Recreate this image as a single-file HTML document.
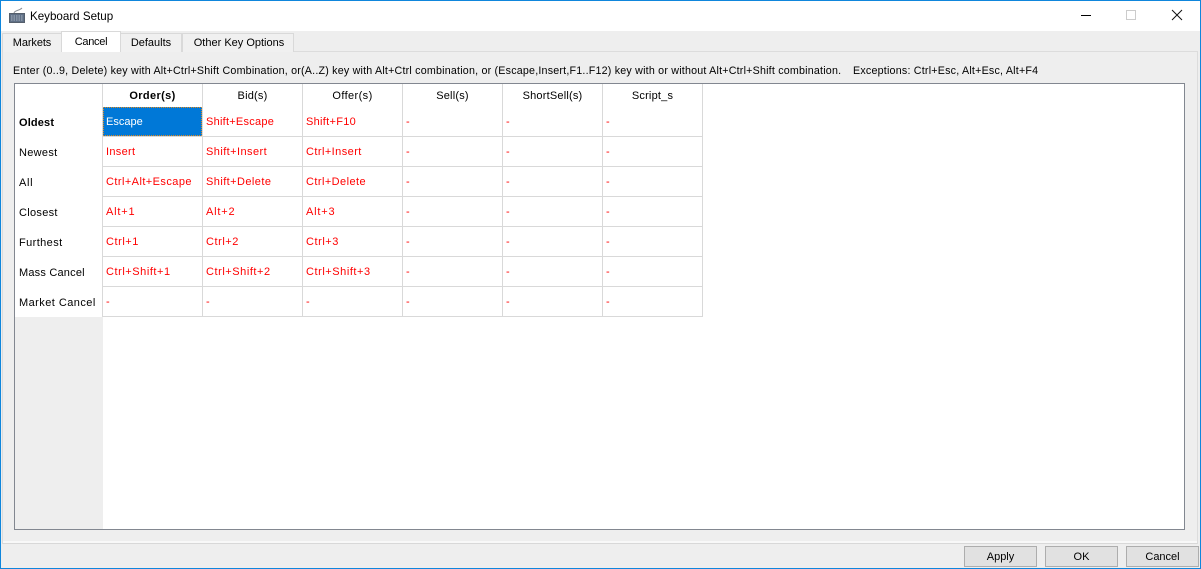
<!DOCTYPE html>
<html><head><meta charset="utf-8"><style>
html,body{margin:0;padding:0;width:1201px;height:569px;overflow:hidden;background:#eee;font-family:"Liberation Sans",sans-serif;font-size:11px;color:#000}
div{position:absolute;box-sizing:border-box}
.t{white-space:nowrap;line-height:14px;height:14px}
.r{color:#f00;letter-spacing:.43px}
.l{letter-spacing:.3px}
.n{letter-spacing:.8px}
.m{letter-spacing:.55px}
.c{text-align:center;letter-spacing:.2px}
.v{width:1px;top:84px;height:233px;background:#d9d9d9}
.h{left:103px;width:600px;height:1px;background:#d9d9d9}
.btn{top:546px;height:21px;width:73px;background:#e1e1e1;border:1px solid #adadad;text-align:center;line-height:20px}
.tab{top:33px;height:19px;background:#f0f0f0;border:1px solid #d9d9d9;border-bottom:0;text-align:center;line-height:18px}
</style></head><body>
<div style="left:0;top:0;width:1201px;height:31px;background:#fff"></div>
<svg style="position:absolute;left:9px;top:7px" width="17" height="16" viewBox="0 0 17 16">
<path d="M5 6 C6 3 10 4 13 1" fill="none" stroke="#8a8f96" stroke-width="1"/>
<rect x="0.5" y="6.5" width="15" height="9" fill="#5f6f85" stroke="#555f6c"/>
<path d="M2 9h12M2 11h12M2 13h12" stroke="#aab4c2" stroke-width="1" stroke-dasharray="1.5 1"/>
</svg>
<div class="t" style="left:30px;top:10px;font-size:11.6px">Keyboard Setup</div>
<div style="left:1081px;top:15px;width:10px;height:1px;background:#000"></div>
<div style="left:1126px;top:10px;width:10px;height:10px;border:1px solid #ccc"></div>
<svg style="position:absolute;left:1171px;top:9px" width="12" height="12"><path d="M1 1L11 11M11 1L1 11" stroke="#111" stroke-width="1"/></svg>

<div style="left:2px;top:51px;width:1196px;height:493px;background:#eee;border:1px solid #dcdcdc;border-bottom:2px solid #d8d8d8"></div>
<div style="left:3px;top:541px;width:1194px;height:2px;background:#f8f8f8"></div>
<div class="tab" style="left:2px;width:60px;letter-spacing:-.1px">Markets</div>
<div class="tab" style="left:120px;width:62px">Defaults</div>
<div class="tab" style="left:182px;width:112px;padding-left:2px">Other Key Options</div>
<div class="tab" style="left:61px;top:31px;width:60px;height:21px;background:#fff;line-height:20px;letter-spacing:-.3px">Cancel</div>

<div class="t" style="left:13px;top:64px;font-size:10.7px;letter-spacing:.207px">Enter (0..9, Delete) key with Alt+Ctrl+Shift Combination, or(A..Z) key with Alt+Ctrl combination, or (Escape,Insert,F1..F12) key with or without Alt+Ctrl+Shift combination.</div>
<div class="t" style="left:853px;top:64px;font-size:10.7px;letter-spacing:.216px">Exceptions: Ctrl+Esc, Alt+Esc, Alt+F4</div>

<div style="left:14px;top:83px;width:1171px;height:447px;background:#fff;border:1px solid #828790"></div>
<div style="left:15px;top:317px;width:88px;height:212px;background:#eee"></div>
<div class="v" style="left:102px"></div><div class="v" style="left:202px"></div><div class="v" style="left:302px"></div><div class="v" style="left:402px"></div><div class="v" style="left:502px"></div><div class="v" style="left:602px"></div><div class="v" style="left:702px"></div>
<div class="h" style="top:136px"></div><div class="h" style="top:166px"></div><div class="h" style="top:196px"></div><div class="h" style="top:226px"></div><div class="h" style="top:256px"></div><div class="h" style="top:286px"></div><div class="h" style="top:316px"></div>

<div class="t c" style="left:103px;width:99px;top:89px;font-weight:bold;letter-spacing:.35px">Order(s)</div>
<div class="t c" style="left:203px;width:99px;top:89px">Bid(s)</div>
<div class="t c" style="left:303px;width:99px;top:89px;letter-spacing:.4px">Offer(s)</div>
<div class="t c" style="left:403px;width:99px;top:89px">Sell(s)</div>
<div class="t c" style="left:503px;width:99px;top:89px">ShortSell(s)</div>
<div class="t c" style="left:603px;width:99px;top:89px">Script_s</div>

<div class="t l" style="left:19px;top:116px;font-weight:bold;letter-spacing:.15px">Oldest</div>
<div class="t l" style="left:19px;top:146px">Newest</div>
<div class="t l" style="left:19px;top:176px;letter-spacing:.7px">All</div>
<div class="t l" style="left:19px;top:206px">Closest</div>
<div class="t l" style="left:19px;top:236px;letter-spacing:.4px">Furthest</div>
<div class="t l" style="left:19px;top:266px;letter-spacing:.2px">Mass Cancel</div>
<div class="t l" style="left:19px;top:296px;letter-spacing:.45px">Market Cancel</div>

<div style="left:103px;top:107px;width:99px;height:29px;background:#0078d7;border:1px dotted #e08a1e"></div>
<div class="t" style="left:106px;top:115px;color:#fff">Escape</div>
<div class="t r" style="left:206px;top:115px;letter-spacing:.25px">Shift+Escape</div>
<div class="t r" style="left:306px;top:115px;letter-spacing:.3px">Shift+F10</div>
<div class="t r" style="left:406px;top:115px">-</div><div class="t r" style="left:506px;top:115px">-</div><div class="t r" style="left:606px;top:115px">-</div>

<div class="t r" style="left:106px;top:145px;letter-spacing:.3px">Insert</div>
<div class="t r" style="left:206px;top:145px">Shift+Insert</div>
<div class="t r" style="left:306px;top:145px">Ctrl+Insert</div>
<div class="t r" style="left:406px;top:145px">-</div><div class="t r" style="left:506px;top:145px">-</div><div class="t r" style="left:606px;top:145px">-</div>

<div class="t r" style="left:106px;top:175px">Ctrl+Alt+Escape</div>
<div class="t r" style="left:206px;top:175px">Shift+Delete</div>
<div class="t r" style="left:306px;top:175px">Ctrl+Delete</div>
<div class="t r" style="left:406px;top:175px">-</div><div class="t r" style="left:506px;top:175px">-</div><div class="t r" style="left:606px;top:175px">-</div>

<div class="t r n" style="left:106px;top:205px">Alt+1</div>
<div class="t r n" style="left:206px;top:205px">Alt+2</div>
<div class="t r n" style="left:306px;top:205px">Alt+3</div>
<div class="t r" style="left:406px;top:205px">-</div><div class="t r" style="left:506px;top:205px">-</div><div class="t r" style="left:606px;top:205px">-</div>

<div class="t r m" style="left:106px;top:235px">Ctrl+1</div>
<div class="t r m" style="left:206px;top:235px">Ctrl+2</div>
<div class="t r m" style="left:306px;top:235px">Ctrl+3</div>
<div class="t r" style="left:406px;top:235px">-</div><div class="t r" style="left:506px;top:235px">-</div><div class="t r" style="left:606px;top:235px">-</div>

<div class="t r m" style="left:106px;top:265px">Ctrl+Shift+1</div>
<div class="t r m" style="left:206px;top:265px">Ctrl+Shift+2</div>
<div class="t r m" style="left:306px;top:265px">Ctrl+Shift+3</div>
<div class="t r" style="left:406px;top:265px">-</div><div class="t r" style="left:506px;top:265px">-</div><div class="t r" style="left:606px;top:265px">-</div>

<div class="t r" style="left:106px;top:295px">-</div><div class="t r" style="left:206px;top:295px">-</div><div class="t r" style="left:306px;top:295px">-</div>
<div class="t r" style="left:406px;top:295px">-</div><div class="t r" style="left:506px;top:295px">-</div><div class="t r" style="left:606px;top:295px">-</div>

<div class="btn" style="left:964px">Apply</div>
<div class="btn" style="left:1045px">OK</div>
<div class="btn" style="left:1126px">Cancel</div>

<div style="left:0;top:0;width:1201px;height:569px;border:1px solid #0f86dc"></div>
</body></html>
